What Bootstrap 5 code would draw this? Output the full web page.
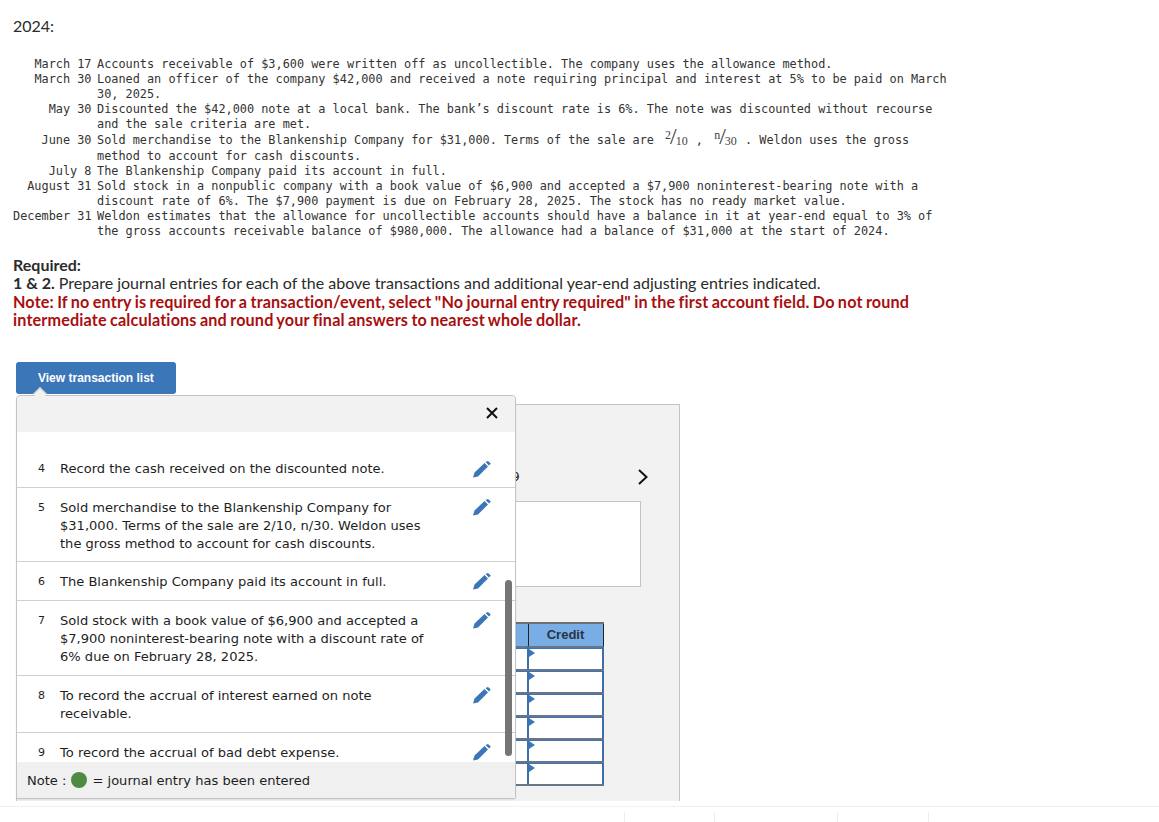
<!DOCTYPE html>
<html lang="en">
<head>
<meta charset="utf-8">
<title>Journal entries</title>
<link href="https://cdn.jsdelivr.net/npm/bootstrap@5.3.0/dist/css/bootstrap.min.css" rel="stylesheet">
<style>
html,body{height:822px;overflow:hidden;background:#fff}
body{font-family:"Lato",sans-serif;color:#2b2b2b;position:relative;font-variant-ligatures:none}
.year-line{font-size:16px;line-height:18px;padding:17px 0 0 13px;margin:0}
.ledger{font-family:"DejaVu Sans Mono",monospace;font-size:11.86px;line-height:15px;color:#333;margin:22px 0 0 13px;width:960px}
.led-row{display:grid;grid-template-columns:78.5px 1fr;column-gap:5.5px}
.led-row.tall{line-height:16px}
.led-date{text-align:right;white-space:nowrap}
.frac{font-family:"Liberation Serif",serif;font-size:24px;font-weight:400;line-height:0;margin:0 1px 0 4px;color:#444}
.frac sup,.frac sub{font-size:12px;line-height:0;position:static}
.frac sup{vertical-align:5px;margin-right:-1px}
.frac sub{vertical-align:-1px;margin-left:-1px}
.req{font-size:16px;line-height:18px;margin:17px 0 0 13px;width:930px}
.req-note{color:#a80f0f;font-weight:700;font-size:16.2px;margin-top:1px;letter-spacing:.15px;word-spacing:-.8px}
.stage{position:relative;margin:33px 0 0 16px;width:664px}
.view-btn{width:160px;height:32px;background:#3b76b8;border:0;border-radius:3px;color:#fff;font:700 12px/32px "Liberation Sans",sans-serif;text-align:left;padding:0 0 0 22px;display:block}
.back-panel{margin-top:10px;height:397px;background:#f2f2f2;border:1px solid #c4c4c4;border-bottom:0;padding:0 38px 0 0;display:flex;flex-direction:column;align-items:flex-end}
.chev{margin:64px -8px 0 0}
.peek{font-family:"DejaVu Sans",sans-serif;font-size:12px;position:absolute;left:496px;top:106px;line-height:18px;color:#222}
.white-box{width:100%;height:86px;background:#fff;border:1px solid #c4c4c4;margin-top:16px;flex:none}
.je-grid{border-collapse:collapse;margin:35px 37px 0 0;width:520px;flex:none}
.je-grid th{background:#79ade6;height:24px;border:1px solid #222;border-top:2px solid #707070;font:700 13px/20px "Liberation Sans",sans-serif;text-align:center;color:#2a3440;padding:0}
.je-grid td{height:23px;background:#fff;border:2px solid #3f6fa8;border-top-color:#6a7687;border-bottom-color:#6a7687;padding:0;position:relative;box-shadow:inset 0 1px 0 #3b76b8}
.je-grid td.cred::before{content:"";position:absolute;left:0;top:1px;border-left:6px solid #3b76b8;border-top:4px solid transparent;border-bottom:4px solid transparent}
.je-grid .c1{width:75px}
.pop{position:absolute;left:0;top:33px;width:500px;height:404px;background:#fff;border:1px solid #c4c4c4;border-radius:4px 4px 2px 2px;box-shadow:0 1px 2px rgba(0,0,0,.08);display:flex;flex-direction:column;font-family:"DejaVu Sans",sans-serif}
.pop::before{content:"";position:absolute;left:18px;top:-7px;width:10px;height:10px;background:#f2f2f2;border:1px solid #c4c4c4;border-width:1px 0 0 1px;transform:rotate(45deg)}
.pop-head{height:36px;background:#f2f2f2;display:flex;justify-content:flex-end;align-items:center;padding:0 17px 2px 0;border-radius:4px 4px 0 0;flex:none}
.pop-list{flex:1;overflow:hidden;padding-top:19px;position:relative}
.tx{display:flex;border-bottom:1px solid #d0d0d0;padding:11px 0 9px;font-size:13.05px;line-height:18px;color:#1e1e1e}
.tx-n{width:43px;padding-left:21px;font-size:11px;flex:none}
.tx-t{width:382px;flex:none}
.tx-ic{margin:-1px 0 0 31px;flex:none;height:18px}
.tx.first{padding:9px 0}
.tx.first .tx-ic{margin-top:0}
.tx.snug{padding-bottom:8px}
.scroll-thumb{position:absolute;right:3px;top:148px;width:7px;height:176px;border-radius:4px;background:#757575}
.pop-note{height:36px;background:#f0f0f0;font-size:13.05px;line-height:32px;padding-left:10px;color:#1e1e1e;flex:none;display:flex;align-items:center}
.note-txt{padding-top:2px}
.dot{display:inline-block;width:16px;height:16px;border-radius:50%;background:#4f8a43;margin:0 5px 0 5px}
.foot{position:absolute;left:0;right:0;top:806px;height:16px;border-top:1px solid #f0f0f0}
.tick{position:absolute;top:5px;height:11px;width:1px;background:#eee}
.t1{left:624px}.t2{left:714px}.t3{left:837px}.t4{left:928px}
</style>
</head>
<body>
<p class="year-line">2024:</p>
<div class="ledger">
<div class="led-row"><div class="led-date">March 17</div><div>Accounts receivable of $3,600 were written off as uncollectible. The company uses the allowance method.</div></div>
<div class="led-row"><div class="led-date">March 30</div><div>Loaned an officer of the company $42,000 and received a note requiring principal and interest at 5% to be paid on March<br>30, 2025.</div></div>
<div class="led-row"><div class="led-date">May 30</div><div>Discounted the $42,000 note at a local bank. The bank’s discount rate is 6%. The note was discounted without recourse<br>and the sale criteria are met.</div></div>
<div class="led-row tall"><div class="led-date">June 30</div><div>Sold merchandise to the Blankenship Company for $31,000. Terms of the sale are <span class="frac"><sup>2</sup>/<sub>10</sub></span> , <span class="frac"><sup>n</sup>/<sub>30</sub></span> . Weldon uses the gross<br>method to account for cash discounts.</div></div>
<div class="led-row"><div class="led-date">July 8</div><div>The Blankenship Company paid its account in full.</div></div>
<div class="led-row"><div class="led-date">August 31</div><div>Sold stock in a nonpublic company with a book value of $6,900 and accepted a $7,900 noninterest-bearing note with a<br>discount rate of 6%. The $7,900 payment is due on February 28, 2025. The stock has no ready market value.</div></div>
<div class="led-row"><div class="led-date">December 31</div><div>Weldon estimates that the allowance for uncollectible accounts should have a balance in it at year-end equal to 3% of<br>the gross accounts receivable balance of $980,000. The allowance had a balance of $31,000 at the start of 2024.</div></div>
</div>
<div class="req">
<div class="fw-bold">Required:</div>
<div><span class="fw-bold">1 &amp; 2.</span> Prepare journal entries for each of the above transactions and additional year-end adjusting entries indicated.</div>
<div class="req-note">Note: If no entry is required for a transaction/event, select "No journal entry required" in the first account field. Do not round<br>intermediate calculations and round your final answers to nearest whole dollar.</div>
</div>
<div class="stage">
<button type="button" class="view-btn">View transaction list</button>
<div class="back-panel">
<svg class="chev" width="12" height="16" viewBox="0 0 12 16"><path d="M2 1 9.5 8 2 15" fill="none" stroke="#111" stroke-width="2"/></svg>
<span class="peek">9</span>
<div class="white-box"></div>
<table class="je-grid">
<tr><th></th><th class="c1">Credit</th></tr>
<tr><td></td><td class="cred"></td></tr>
<tr><td></td><td class="cred"></td></tr>
<tr><td></td><td class="cred"></td></tr>
<tr><td></td><td class="cred"></td></tr>
<tr><td></td><td class="cred"></td></tr>
<tr><td></td><td class="cred"></td></tr>
</table>
</div>
<div class="pop">
<div class="pop-head"><svg width="12" height="12" viewBox="0 0 12 12"><path d="M1 1 11 11M11 1 1 11" stroke="#111" stroke-width="2" fill="none"/></svg></div>
<div class="pop-list">
<div class="tx first"><div class="tx-n">4</div><div class="tx-t">Record the cash received on the discounted note.</div><svg class="tx-ic" width="18" height="18" viewBox="0 0 18 18"><path d="M0 17.5 1.5 12.5 11.5 3 15 6.5 5 16.5ZM12.5 2 15 1 17.8 3.5 16 5.5Z" fill="#3b76b8"/></svg></div>
<div class="tx snug"><div class="tx-n">5</div><div class="tx-t">Sold merchandise to the Blankenship Company for<br>$31,000. Terms of the sale are 2/10, n/30. Weldon uses<br>the gross method to account for cash discounts.</div><svg class="tx-ic" width="18" height="18" viewBox="0 0 18 18"><path d="M0 17.5 1.5 12.5 11.5 3 15 6.5 5 16.5ZM12.5 2 15 1 17.8 3.5 16 5.5Z" fill="#3b76b8"/></svg></div>
<div class="tx"><div class="tx-n">6</div><div class="tx-t">The Blankenship Company paid its account in full.</div><svg class="tx-ic" width="18" height="18" viewBox="0 0 18 18"><path d="M0 17.5 1.5 12.5 11.5 3 15 6.5 5 16.5ZM12.5 2 15 1 17.8 3.5 16 5.5Z" fill="#3b76b8"/></svg></div>
<div class="tx"><div class="tx-n">7</div><div class="tx-t">Sold stock with a book value of $6,900 and accepted a<br>$7,900 noninterest-bearing note with a discount rate of<br>6% due on February 28, 2025.</div><svg class="tx-ic" width="18" height="18" viewBox="0 0 18 18"><path d="M0 17.5 1.5 12.5 11.5 3 15 6.5 5 16.5ZM12.5 2 15 1 17.8 3.5 16 5.5Z" fill="#3b76b8"/></svg></div>
<div class="tx"><div class="tx-n">8</div><div class="tx-t">To record the accrual of interest earned on note<br>receivable.</div><svg class="tx-ic" width="18" height="18" viewBox="0 0 18 18"><path d="M0 17.5 1.5 12.5 11.5 3 15 6.5 5 16.5ZM12.5 2 15 1 17.8 3.5 16 5.5Z" fill="#3b76b8"/></svg></div>
<div class="tx"><div class="tx-n">9</div><div class="tx-t">To record the accrual of bad debt expense.</div><svg class="tx-ic" width="18" height="18" viewBox="0 0 18 18"><path d="M0 17.5 1.5 12.5 11.5 3 15 6.5 5 16.5ZM12.5 2 15 1 17.8 3.5 16 5.5Z" fill="#3b76b8"/></svg></div>
<div class="scroll-thumb"></div>
</div>
<div class="pop-note"><span class="note-txt">Note :</span><span class="dot"></span><span class="note-txt">= journal entry has been entered</span></div>
</div>
</div>
<div class="foot"><span class="tick t1"></span><span class="tick t2"></span><span class="tick t3"></span><span class="tick t4"></span></div>
<script src="https://cdn.jsdelivr.net/npm/bootstrap@5.3.0/dist/js/bootstrap.bundle.min.js"></script>
</body>
</html>
